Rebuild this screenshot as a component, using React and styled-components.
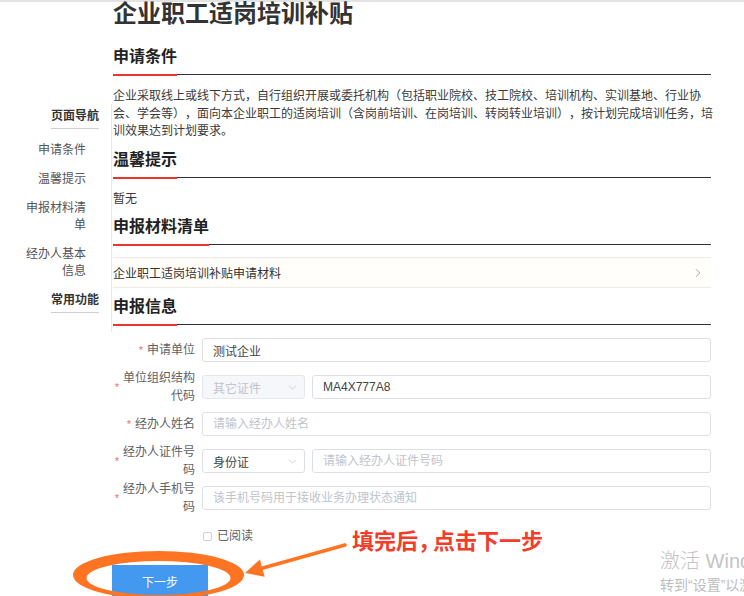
import React from "react";
import styled, { createGlobalStyle } from "styled-components";
import { ChevronDown, ChevronRight } from "lucide-react";

const GlobalStyle = createGlobalStyle`
  html, body {
    margin: 0;
    padding: 0;
    height: 100%;
    overflow: hidden;
    background: #fff;
  }
  body {
    font-family: "Liberation Sans", "Noto Sans CJK SC", sans-serif;
    font-size: 12px;
    color: #333;
    text-spacing-trim: space-all;
  }
`;

const Screen = styled.div`
  position: relative;
  width: 744px;
  height: 596px;
  overflow: hidden;
`;

const Page = styled.div`
  display: flex;
  align-items: flex-start;
  border-top: 2px solid #e3e3e3;
`;

const Sidebar = styled.aside`
  flex: none;
  width: 111px;
  margin-top: 102px;
  padding: 4px 0 12px;
  border-right: 1px solid #e8e8e8;
`;

const NavHeading = styled.div`
  width: fit-content;
  margin: ${(p) => (p.$first ? 0 : 6)}px 12px 7px auto;
  padding-bottom: 3px;
  border-bottom: 1px solid #cfcfcf;
  font-weight: bold;
  line-height: 17px;
  color: #333;
`;

const NavItem = styled.div`
  width: 62px;
  margin: 0 25px 0 auto;
  padding: 6px 0;
  text-align: right;
  line-height: 17px;
  color: #555;
`;

const Main = styled.main`
  width: 598px;
  margin-left: 1px;
`;

const Title = styled.h1`
  margin: 0;
  font-size: 24px;
  line-height: 24px;
  font-weight: bold;
  color: #333;
`;

const SectionHead = styled.h2`
  display: flex;
  margin: ${(p) => (p.$first ? 19 : 7)}px 0 0;
  font-size: 16px;
  line-height: 24px;
  font-weight: bold;
  color: #222;
  border-bottom: 1px solid #333;
`;

const HeadText = styled.span`
  padding-bottom: 5px;
  border-bottom: 2px solid #e8362c;
  margin-bottom: -2px;
`;

const Text = styled.p`
  margin: 13px -2px 0 0;
  line-height: 17.5px;
  color: #3a3a3a;
`;

const MaterialRow = styled.div`
  display: flex;
  align-items: center;
  justify-content: space-between;
  height: 29px;
  margin-top: 12px;
  padding-right: 6px;
  border-top: 1px solid #ebebeb;
  border-bottom: 1px solid #ebebeb;
  background: #fffefa;
  color: #333;
`;

const Form = styled.form`
  margin-top: 13px;
`;

const FormRow = styled.div`
  display: flex;
  align-items: center;
  height: 24px;
  margin-bottom: 13px;
`;

const Label = styled.label`
  flex: none;
  display: flex;
  align-items: center;
  justify-content: flex-end;
  gap: 4px;
  width: 82px;
  margin-right: 7px;
  line-height: 18px;
  color: #606266;
`;

const Star = styled.span`
  color: #f56c6c;
  font-size: 11px;
`;

const LabelText = styled.span`
  max-width: 72px;
  text-align: right;
`;

const Input = styled.input`
  flex: 1;
  min-width: 0;
  height: 24px;
  box-sizing: border-box;
  padding: 0 10px;
  border: 1px solid #dcdfe6;
  border-radius: 3px;
  font: inherit;
  font-size: 12px;
  color: #444;
  background: #fff;
  outline: none;

  &::placeholder {
    color: #c0c4cc;
  }
`;

const Select = styled.div`
  flex: none;
  display: flex;
  align-items: center;
  justify-content: space-between;
  width: 103px;
  height: 24px;
  box-sizing: border-box;
  margin-right: 7px;
  padding: 0 5px 0 10px;
  border: 1px solid ${(p) => (p.$disabled ? "#e4e7ed" : "#dcdfe6")};
  border-radius: 3px;
  background: ${(p) => (p.$disabled ? "#f5f7fa" : "#fff")};
  color: ${(p) => (p.$disabled ? "#c0c4cc" : "#444")};
`;

const CheckRow = styled.div`
  display: flex;
  align-items: center;
  gap: 5px;
  margin-left: 90px;
  padding-top: 4px;
  line-height: 18px;
  color: #606266;
`;

const CheckBox = styled.span`
  width: 7px;
  height: 7px;
  border: 1px solid #cdd0d6;
  border-radius: 2px;
  background: #fff;
`;

const NextButton = styled.button`
  display: block;
  width: 96px;
  height: 32px;
  margin: 20px 0 0 -1px;
  border: 0;
  background: #4399ef;
  color: #fff;
  font-family: inherit;
  font-size: 12px;
`;

const Annotation = styled.svg`
  position: absolute;
  left: 0;
  top: 0;
  pointer-events: none;
`;

const Callout = styled.div`
  position: absolute;
  left: 352px;
  top: 531px;
  font-size: 22px;
  line-height: 22px;
  font-weight: bold;
  color: #f23d2a;
  white-space: nowrap;
`;

const Comma = styled.span`
  letter-spacing: -7px;
`;

const Watermark = styled.div`
  position: absolute;
  left: 660px;
  top: 550px;
  color: #c4c4c4;
  white-space: nowrap;
`;

const WatermarkTitle = styled.div`
  font-size: 20px;
  line-height: 22px;
  font-weight: 300;
`;

const WatermarkSub = styled.div`
  margin-top: 5px;
  font-size: 14px;
  line-height: 16px;
  color: #bdbdbd;
`;

const navItems = ["申请条件", "温馨提示", "申报材料清单", "经办人基本信息"];

const Section = ({ title, first, children }) => (
  <>
    <SectionHead $first={first}>
      <HeadText>{title}</HeadText>
    </SectionHead>
    {children}
  </>
);

const Field = ({ label, children }) => (
  <FormRow>
    <Label>
      <Star>*</Star>
      <LabelText>{label}</LabelText>
    </Label>
    {children}
  </FormRow>
);

const CertSelect = ({ value, disabled }) => (
  <Select $disabled={disabled}>
    {value}
    <ChevronDown size={13} strokeWidth={1.4} color="#c0c4cc" />
  </Select>
);

export default function App() {
  return (
    <Screen>
      <GlobalStyle />
      <Page>
        <Sidebar>
          <NavHeading $first>页面导航</NavHeading>
          {navItems.map((item) => (
            <NavItem key={item}>{item}</NavItem>
          ))}
          <NavHeading>常用功能</NavHeading>
        </Sidebar>

        <Main>
          <Title>企业职工适岗培训补贴</Title>

          <Section title="申请条件" first>
            <Text>
              企业采取线上或线下方式，自行组织开展或委托机构（包括职业院校、技工院校、培训机构、实训基地、行业协会、学会等），面向本企业职工的适岗培训（含岗前培训、在岗培训、转岗转业培训），按计划完成培训任务，培训效果达到计划要求。
            </Text>
          </Section>

          <Section title="温馨提示">
            <Text>暂无</Text>
          </Section>

          <Section title="申报材料清单">
            <MaterialRow>
              企业职工适岗培训补贴申请材料
              <ChevronRight size={14} strokeWidth={1.3} color="#7d8aa3" />
            </MaterialRow>
          </Section>

          <Section title="申报信息">
            <Form>
              <Field label="申请单位">
                <Input defaultValue="测试企业" />
              </Field>
              <Field label="单位组织结构代码">
                <CertSelect value="其它证件" disabled />
                <Input defaultValue="MA4X777A8" />
              </Field>
              <Field label="经办人姓名">
                <Input placeholder="请输入经办人姓名" />
              </Field>
              <Field label="经办人证件号码">
                <CertSelect value="身份证" />
                <Input placeholder="请输入经办人证件号码" />
              </Field>
              <Field label="经办人手机号码">
                <Input placeholder="该手机号码用于接收业务办理状态通知" />
              </Field>
              <CheckRow>
                <CheckBox />
                已阅读
              </CheckRow>
              <NextButton type="button">下一步</NextButton>
            </Form>
          </Section>
        </Main>
      </Page>

      <Annotation width="744" height="596" viewBox="0 0 744 596">
        <path
          fillRule="evenodd"
          fill="#ff7422"
          d="M73,575 a85.5,24 0 1,0 171,0 a85.5,24 0 1,0 -171,0 Z M86.5,578 a72,17 0 1,0 144,0 a72,17 0 1,0 -144,0 Z"
        />
        <line
          x1="345"
          y1="545"
          x2="261"
          y2="568.5"
          stroke="#ff7422"
          strokeWidth="3.5"
          strokeLinecap="round"
        />
        <polygon points="245,573 264.7,576.8 259.9,559.4" fill="#ff7422" />
      </Annotation>

      <Callout>
        填完后<Comma>，</Comma>点击下一步
      </Callout>

      <Watermark>
        <WatermarkTitle>激活 Windows</WatermarkTitle>
        <WatermarkSub>转到“设置”以激活 Windows。</WatermarkSub>
      </Watermark>
    </Screen>
  );
}
